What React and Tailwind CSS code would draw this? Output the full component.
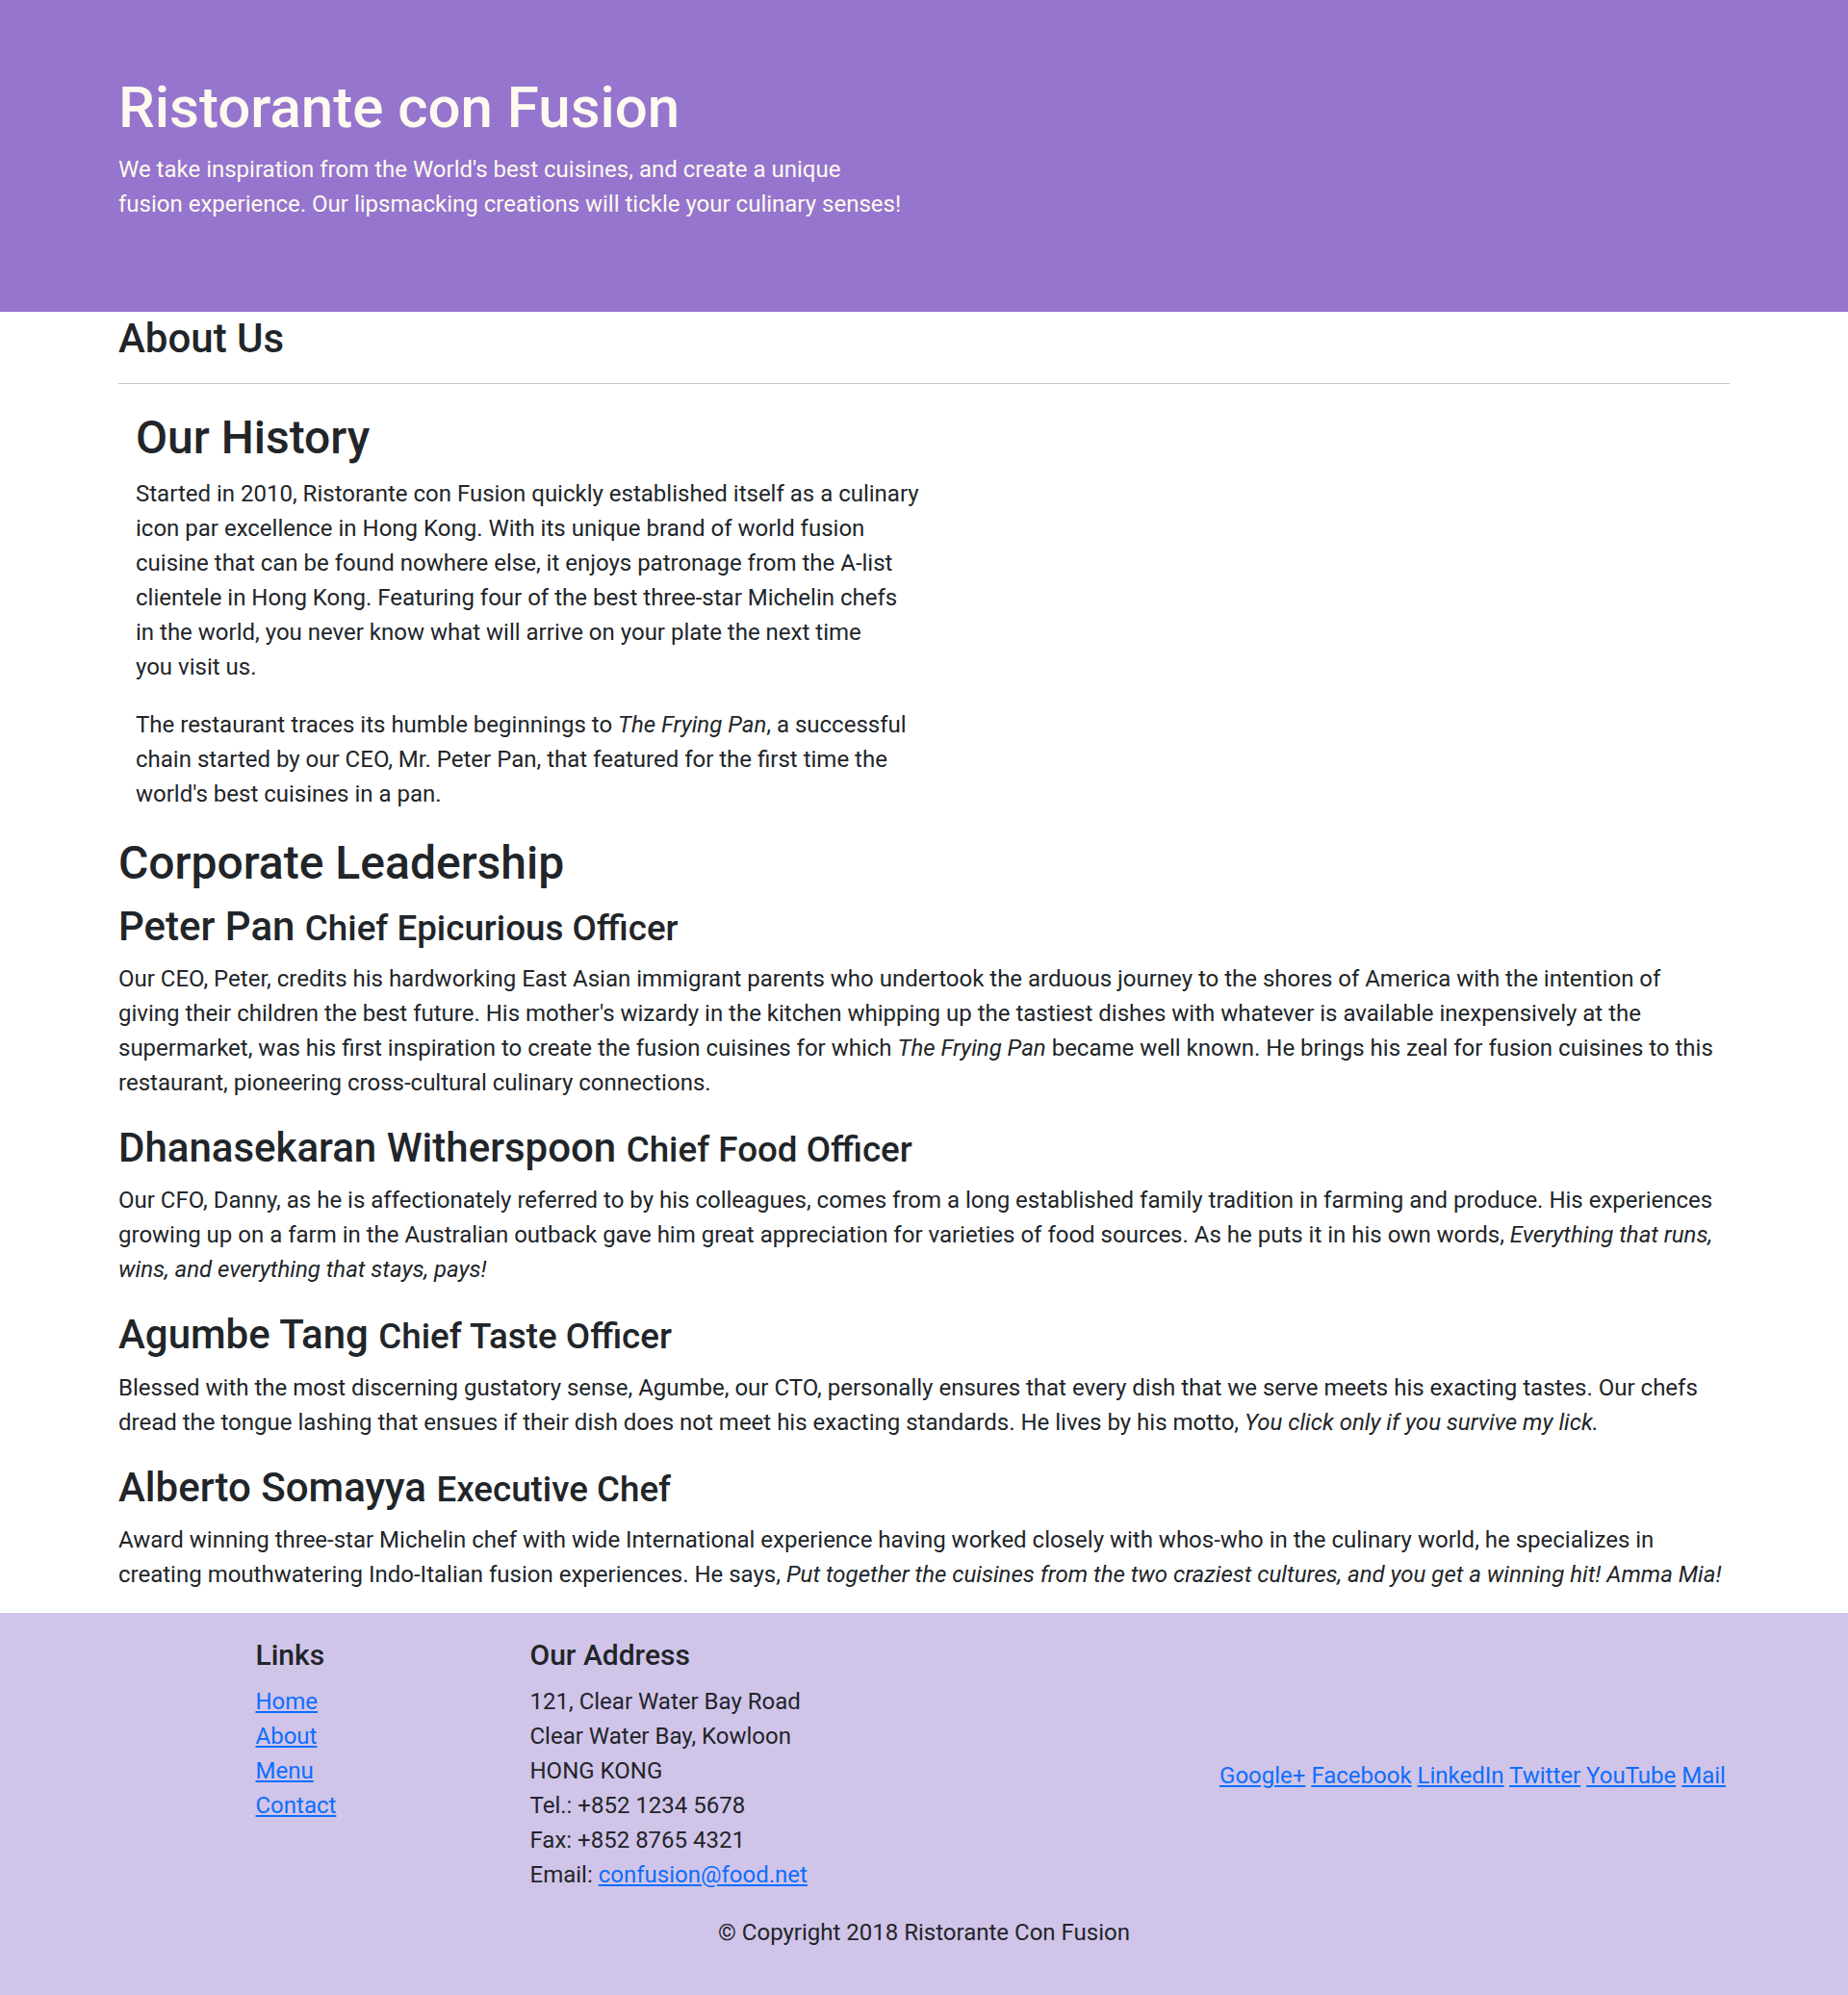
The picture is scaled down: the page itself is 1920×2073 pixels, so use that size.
const leaders = [
  {
    name: "Peter Pan",
    role: "Chief Epicurious Officer",
    bio: (
      <>
        Our CEO, Peter, credits his hardworking East Asian immigrant parents who undertook the arduous journey to the
        shores of America with the intention of
        <br />
        giving their children the best future. His mother's wizardy in the kitchen whipping up the tastiest dishes with
        whatever is available inexpensively at the supermarket, was his first inspiration to create the fusion cuisines
        for which <em>The Frying Pan</em> became well known. He brings his zeal for fusion cuisines to this restaurant,
        pioneering cross-cultural culinary connections.
      </>
    ),
  },
  {
    name: "Dhanasekaran Witherspoon",
    role: "Chief Food Officer",
    bio: (
      <>
        Our CFO, Danny, as he is affectionately referred to by his colleagues, comes from a long established family
        tradition in farming and produce. His experiences growing up on a farm in the Australian outback gave him great
        appreciation for varieties of food sources. As he puts it in his own words,{" "}
        <em>Everything that runs, wins, and everything that stays, pays!</em>
      </>
    ),
  },
  {
    name: "Agumbe Tang",
    role: "Chief Taste Officer",
    bio: (
      <>
        Blessed with the most discerning gustatory sense, Agumbe, our CTO, personally ensures that every dish that we serve
        meets his exacting tastes. Our chefs dread the tongue lashing that ensues if their dish does not meet his exacting
        standards. He lives by his motto, <em>You click only if you survive my lick.</em>
      </>
    ),
  },
  {
    name: "Alberto Somayya",
    role: "Executive Chef",
    bio: (
      <>
        Award winning three-star Michelin chef with wide International experience having worked closely with whos-who in
        the culinary world, he specializes in creating mouthwatering Indo-Italian fusion experiences. He says,{" "}
        <em>Put together the cuisines from the two craziest cultures, and you get a winning hit! Amma Mia!</em>
      </>
    ),
  },
];

const socials = ["Google+", "Facebook", "LinkedIn", "Twitter", "YouTube", "Mail"];

function Link({ children }) {
  return (
    <a href="#" className="text-[#0d6efd] underline">
      {children}
    </a>
  );
}

export default function App() {
  return (
    <div className="flex min-h-screen flex-col bg-white font-[Roboto] text-[24px] leading-[36px] text-[#212529]">
      {/* jumbotron */}
      <header className="bg-[#9575cd] pt-[72px] pb-[72px] text-[#fffaf0]">
        <div className="mx-auto w-[1674px]">
          <div className="w-[819px]">
            <h1 className="pt-[4px] mb-[8px] text-[60px] leading-[72px] font-medium">Ristorante con Fusion</h1>
            <p className="pt-[2px] mb-[22px]">
              We take inspiration from the World's best cuisines, and create a unique fusion experience. Our lipsmacking
              creations will tickle your culinary senses!
            </p>
          </div>
        </div>
      </header>

      <main className="mx-auto w-[1674px]">
        <h3 className="pt-[3px] text-[42px] leading-[50.4px] font-medium">About Us</h3>
        <hr className="mt-[21px] mb-[24px] border-[#c8c9ca]" />

        <div className="ml-[18px] w-[830px]">
          <h2 className="pt-[3px] mb-[9px] text-[48px] leading-[57.6px] font-medium">Our History</h2>
          <p className="pt-[2px] mb-[22px]">
            Started in 2010, Ristorante con Fusion quickly established itself as a culinary
            <br />
            icon par excellence in Hong Kong. With its unique brand of world fusion
            <br />
            cuisine that can be found nowhere else, it enjoys patronage from the A-list
            <br />
            clientele in Hong Kong. Featuring four of the best three-star Michelin chefs
            <br />
            in the world, you never know what will arrive on your plate the next time
            <br />
            you visit us.
          </p>
          <p className="pt-[2px] mb-[22px] w-[801px]">
            The restaurant traces its humble beginnings to <em>The Frying Pan</em>, a successful chain started by our CEO,
            Mr. Peter Pan, that featured for the first time the world's best cuisines in a pan.
          </p>
        </div>

        <h2 className="pt-[3px] mb-[9px] text-[48px] leading-[57.6px] font-medium">Corporate Leadership</h2>
        {leaders.map((l) => (
          <div key={l.name}>
            <h3 className="pt-[3px] mb-[9px] h-[53.4px] text-[42px] leading-[50.4px] font-medium">
              {l.name} <small className="text-[0.875em] leading-none">{l.role}</small>
            </h3>
            <p className="pt-[2px] mb-[22px]">{l.bio}</p>
          </div>
        ))}
      </main>

      <footer className="grow bg-[#d1c4e9] pt-[24px] pb-[24px]">
        <div className="mx-auto w-[1710px]">
          <div className="flex">
            <div className="ml-[142.5px] w-[285px] px-[18px]">
              <h5 className="pt-[2px] mb-[10px] text-[30px] leading-[36px] font-medium">Links</h5>
              <ul className="pt-[2px]">
                <li><Link>Home</Link></li>
                <li><Link>About</Link></li>
                <li><Link>Menu</Link></li>
                <li><Link>Contact</Link></li>
              </ul>
            </div>
            <div className="w-[712.5px] px-[18px]">
              <h5 className="pt-[2px] mb-[10px] text-[30px] leading-[36px] font-medium">Our Address</h5>
              <address className="pt-[2px] mb-[22px] not-italic">
                121, Clear Water Bay Road<br />
                Clear Water Bay, Kowloon<br />
                HONG KONG<br />
                Tel.: +852 1234 5678<br />
                Fax: +852 8765 4321<br />
                Email: <Link>confusion@food.net</Link>
              </address>
            </div>
            <div className="w-[570px] self-center px-[18px] pt-[2px] text-center">
              {socials.map((s, i) => (
                <span key={s}>
                  {i > 0 && " "}
                  <Link>{s}</Link>
                </span>
              ))}
            </div>
          </div>
          <div className="flex justify-center">
            <p className="pt-[2px] mb-[22px]">© Copyright 2018 Ristorante Con Fusion</p>
          </div>
        </div>
      </footer>
    </div>
  );
}
